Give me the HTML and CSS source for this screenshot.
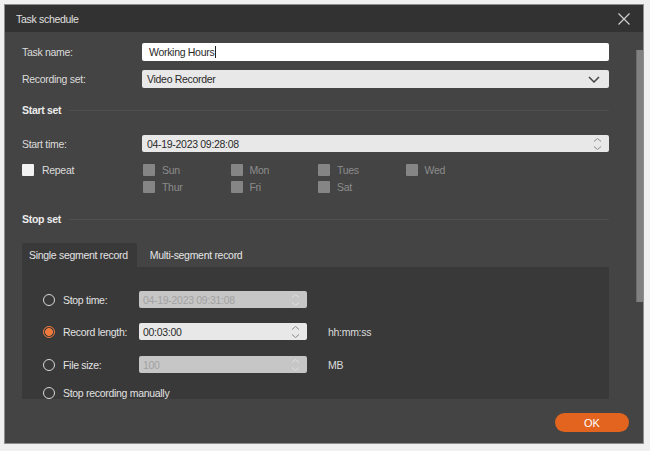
FILE: index.html
```html
<!DOCTYPE html>
<html>
<head>
<meta charset="utf-8">
<link rel="stylesheet" href="styles.css">
</head>
<body>
<div class="window">
  <div class="titlebar">
    <span class="title">Task schedule</span>
    <svg class="close" width="12" height="12" viewBox="0 0 12 12"><path d="M0.5 0.5L11.5 11.5M11.5 0.5L0.5 11.5" stroke="#d0d0d0" stroke-width="1.2" fill="none"/></svg>
  </div>
  <div class="main">
    <div class="content">
      <div class="row r1">
        <span class="lbl">Task name:</span>
        <div class="field white"><span>Working Hours</span><span class="caret"></span></div>
      </div>
      <div class="row r2">
        <span class="lbl">Recording set:</span>
        <div class="field"><span>Video Recorder</span>
          <svg class="chev" width="12" height="7" viewBox="0 0 12 7"><path d="M1 1L6 6L11 1" stroke="#444" stroke-width="1.5" fill="none"/></svg>
        </div>
      </div>
      <div class="section s1"><span>Start set</span><i></i></div>
      <div class="row r3">
        <span class="lbl">Start time:</span>
        <div class="field spin"><span>04-19-2023 09:28:08</span>
          <svg class="spinner" width="9" height="14" viewBox="0 0 9 14"><path d="M1 4.5L4.5 1.5L8 4.5M1 9.5L4.5 12.5L8 9.5" stroke="#8a8a8a" stroke-width="1" fill="none"/></svg>
        </div>
      </div>
      <div class="repeat">
        <div class="rep"><span class="box white"></span><span>Repeat</span></div>
        <div class="days">
          <div class="day"><span class="box"></span><span>Sun</span></div>
          <div class="day"><span class="box"></span><span>Mon</span></div>
          <div class="day"><span class="box"></span><span>Tues</span></div>
          <div class="day"><span class="box"></span><span>Wed</span></div>
          <div class="day"><span class="box"></span><span>Thur</span></div>
          <div class="day"><span class="box"></span><span>Fri</span></div>
          <div class="day"><span class="box"></span><span>Sat</span></div>
        </div>
      </div>
      <div class="section s2"><span>Stop set</span><i></i></div>
      <div class="tabs">
        <div class="tab active">Single segment record</div>
        <div class="tab">Multi-segment record</div>
      </div>
      <div class="panel">
        <div class="prow p1">
          <div class="opt"><span class="radio"></span><span>Stop time:</span></div>
          <div class="field small disabled"><span>04-19-2023 09:31:08</span>
            <svg class="spinner" width="9" height="14" viewBox="0 0 9 14"><path d="M1 4.5L4.5 1.5L8 4.5M1 9.5L4.5 12.5L8 9.5" stroke="#e0e0e0" stroke-width="1" fill="none"/></svg>
          </div>
        </div>
        <div class="prow p2">
          <div class="opt"><span class="radio on"></span><span>Record length:</span></div>
          <div class="field small"><span>00:03:00</span>
            <svg class="spinner" width="9" height="14" viewBox="0 0 9 14"><path d="M1 4.5L4.5 1.5L8 4.5M1 9.5L4.5 12.5L8 9.5" stroke="#8a8a8a" stroke-width="1" fill="none"/></svg>
          </div>
          <span class="unit">hh:mm:ss</span>
        </div>
        <div class="prow p3">
          <div class="opt"><span class="radio"></span><span>File size:</span></div>
          <div class="field small disabled"><span>100</span>
            <svg class="spinner" width="9" height="14" viewBox="0 0 9 14"><path d="M1 4.5L4.5 1.5L8 4.5M1 9.5L4.5 12.5L8 9.5" stroke="#e0e0e0" stroke-width="1" fill="none"/></svg>
          </div>
          <span class="unit">MB</span>
        </div>
        <div class="prow p4">
          <div class="opt wide"><span class="radio"></span><span>Stop recording manually</span></div>
        </div>
      </div>
    </div>
    <div class="scrollbar"><div class="thumb"></div></div>
  </div>
  <div class="footer"><button class="ok">OK</button></div>
</div>
</body>
</html>
```
FILE: styles.css
```css
html, body {
  margin: 0;
}
body {
  background: #f0f0f0;
  padding: 4px;
  font-family: "Liberation Sans", Arial, sans-serif;
  font-size: 10.5px;
  letter-spacing: -0.3px;
  color: #dcdcdc;
}
.window {
  width: 638px;
  height: 438px;
  border: 1px solid #8e8e8e;
  background: #444444;
  display: flex;
  flex-direction: column;
}
.titlebar {
  height: 27px;
  flex: none;
  background: #323232;
  display: flex;
  align-items: center;
  justify-content: space-between;
  padding: 0 13px 0 11px;
}
.title {
  color: #e0e0e0;
}
.main {
  height: 367px;
  flex: none;
  display: flex;
  overflow: hidden;
}
.content {
  flex: 1;
  padding: 11px 27px 0 17px;
}
.scrollbar {
  width: 7px;
  flex: none;
}
.thumb {
  margin-top: 18px;
  height: 252px;
  background: #808080;
  border-left: 1px solid #6c6c6c;
}
.row {
  display: flex;
  align-items: center;
  height: 18px;
}
.lbl {
  width: 120px;
  flex: none;
  color: #dcdcdc;
}
.field {
  flex: 1;
  height: 100%;
  box-sizing: border-box;
  border-radius: 2px;
  background: #e8e8e8;
  color: #2a2a2a;
  padding: 0 5px;
  display: flex;
  align-items: center;
}
.field.white {
  background: #ffffff;
  padding-left: 7px;
}
.caret {
  width: 1px;
  height: 12px;
  background: #222;
  margin-left: 1px;
}
.chev {
  margin-left: auto;
  margin-right: 4px;
}
.spinner {
  margin-left: auto;
  margin-right: 2px;
}
.r2 { margin-top: 9px; height: 18px; }
.r3 { margin-top: 17px; height: 17px; }
.section {
  display: flex;
  align-items: center;
  height: 16px;
  font-weight: bold;
  color: #ececec;
  gap: 8px;
}
.section i {
  flex: 1;
  height: 1px;
  background: #4f4f4f;
}
.s1 { margin-top: 14px; }
.s2 { margin-top: 18px; }
.repeat {
  margin-top: 12px;
  display: flex;
}
.rep {
  width: 120px;
  flex: none;
  display: flex;
  align-items: center;
  gap: 8px;
  height: 12px;
}
.box {
  width: 12px;
  height: 12px;
  border-radius: 1px;
  background: #858585;
  flex: none;
}
.box.white {
  background: #f2f2f2;
}
.days {
  margin-left: 1px;
  display: grid;
  grid-template-columns: repeat(4, 87.5px);
  grid-auto-rows: 12px;
  row-gap: 5px;
}
.day {
  display: flex;
  align-items: center;
  gap: 7px;
  color: #8c8c8c;
}
.tabs {
  margin-top: 16px;
  display: flex;
  height: 24px;
}
.tab {
  padding: 0 8px 0 7px;
  display: flex;
  align-items: center;
  color: #e4e4e4;
}
.tab.active {
  background: #393939;
  border-radius: 2px 2px 0 0;
  padding-right: 9px;
}
.tab + .tab {
  padding-left: 13px;
}
.panel {
  background: #393939;
  padding: 24px 0 40px 21px;
}
.prow {
  display: flex;
  align-items: center;
  height: 17px;
}
.p2 { margin-top: 15px; }
.p3 { margin-top: 16px; }
.p4 { margin-top: 11px; }
.opt {
  width: 96px;
  flex: none;
  display: flex;
  align-items: center;
  gap: 8px;
  color: #e2e2e2;
}
.opt.wide {
  width: auto;
}
.radio {
  width: 12px;
  height: 12px;
  box-sizing: border-box;
  border: 1.5px solid #d8d8d8;
  border-radius: 50%;
  flex: none;
}
.radio.on {
  border-color: #f07a3c;
  background: radial-gradient(circle, #f07a3c 0 3.6px, #393939 4.2px);
}
.field.small {
  flex: none;
  width: 168px;
  padding-left: 4px;
}
.field.disabled {
  background: #c6c6c6;
  color: #a2a2a2;
}
.unit {
  margin-left: 21px;
  color: #dcdcdc;
}
.footer {
  flex: 1;
  display: flex;
  justify-content: flex-end;
  align-items: flex-start;
  padding: 14px 14px 0 0;
  background: #444444;
}
.ok {
  width: 74px;
  height: 19px;
  border: none;
  border-radius: 10px;
  background: #e2641f;
  color: #ffffff;
  font-family: "Liberation Sans", Arial, sans-serif;
  font-size: 11px;
  padding: 0;
}
```
